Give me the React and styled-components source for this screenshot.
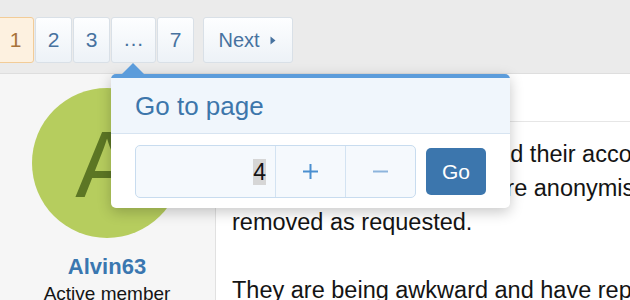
import React from 'react';
import styled, { createGlobalStyle } from 'styled-components';

const GlobalStyle = createGlobalStyle`
    html, body {
        margin: 0;
        padding: 0;
        overflow: hidden;
        background: #ffffff;
        font-family: "Liberation Sans", Arial, sans-serif;
    }
`

const pages = ['1', '2', '3', '…', '7'];

export default function App() {
    return (
        <Page>
            <GlobalStyle />
            <TopBar>
                <Pager>
                    {pages.map((p) => (
                        <PageSlot key={p}>
                            <PageButton $current={p === '1'} $wide={p === '…'}>{p}</PageButton>
                            {p === '…' && <GoToPopup />}
                        </PageSlot>
                    ))}
                    <NextButton>
                        Next
                        <svg width="6" height="9" viewBox="0 0 6 9">
                            <path d="M0.5 0.5 L5.5 4.5 L0.5 8.5 Z" fill="#47729f" />
                        </svg>
                    </NextButton>
                </Pager>
            </TopBar>

            <Post>
                <UserCell>
                    <Avatar>A</Avatar>
                    <UserName>Alvin63</UserName>
                    <UserTitle>Active member</UserTitle>
                </UserCell>
                <MessageCell>
                    <MessageHeader />
                    <MessageBody>
                        <Paragraph>
                            A person has just requested their account be closed and<br />
                            deleted, all of their posts are anonymised and their data<br />
                            removed as requested.
                        </Paragraph>
                        <Paragraph>
                            They are being awkward and have repeatedly asked again.
                        </Paragraph>
                    </MessageBody>
                </MessageCell>
            </Post>
        </Page>
    )
}

function GoToPopup() {
    return (
        <Popup>
            <PopupArrow />
            <PopupHeader>Go to page</PopupHeader>
            <PopupBody>
                <InputGroup>
                    <ValueField><Selected>4</Selected></ValueField>
                    <StepButton>
                        <svg width="17" height="17" viewBox="0 0 17 17">
                            <path d="M8.5 1 V16 M1 8.5 H16" stroke="#4a8fd0" strokeWidth="2" />
                        </svg>
                    </StepButton>
                    <StepButton>
                        <svg width="17" height="17" viewBox="0 0 17 17">
                            <path d="M1 8.5 H16" stroke="#8db4dc" strokeWidth="2" />
                        </svg>
                    </StepButton>
                </InputGroup>
                <GoButton>Go</GoButton>
            </PopupBody>
        </Popup>
    )
}

const Page = styled.div`
    width: 630px;
    height: 300px;
    overflow: hidden;
    position: relative;
`

const TopBar = styled.div`
    height: 73px;
    background: #ebebeb;
    border-bottom: 1px solid #dedede;
    box-sizing: content-box;
`

const Pager = styled.div`
    display: flex;
    align-items: flex-start;
    gap: 1px;
    padding-top: 17px;
    margin-left: -3px;
`

const PageSlot = styled.div`
    position: relative;
`

const PageButton = styled.div`
    box-sizing: border-box;
    width: ${({ $wide }) => ($wide ? '45px' : '37px')};
    height: 46px;
    display: flex;
    align-items: center;
    justify-content: center;
    font-size: 21px;
    border-radius: 3px;
    border: 1px solid ${({ $current }) => ($current ? '#f2cc98' : '#d9e0e7')};
    background: ${({ $current }) => ($current ? '#fdf1e0' : 'linear-gradient(#fdfeff, #edf2f7)')};
    color: ${({ $current }) => ($current ? '#a8733a' : '#47729f')};
    padding-bottom: ${({ $wide }) => ($wide ? '2px' : '0')};
`

const NextButton = styled.div`
    box-sizing: border-box;
    margin-left: 8px;
    width: 90px;
    height: 46px;
    display: flex;
    align-items: center;
    justify-content: center;
    gap: 10px;
    padding-right: 2px;
    font-size: 20px;
    color: #47729f;
    border-radius: 3px;
    border: 1px solid #d9e0e7;
    background: linear-gradient(#fdfeff, #edf2f7);
`

const Popup = styled.div`
    position: absolute;
    z-index: 2;
    top: 57px;
    left: 0;
    width: 399px;
    box-sizing: border-box;
    border-top: 4px solid #5b9cdb;
    border-radius: 5px;
    background: #ffffff;
    box-shadow: 0 4px 14px rgba(0, 0, 0, 0.22);
`

const PopupArrow = styled.div`
    position: absolute;
    top: -15px;
    left: 11px;
    width: 0;
    height: 0;
    border-left: 11px solid transparent;
    border-right: 11px solid transparent;
    border-bottom: 11px solid #5b9cdb;
`

const PopupHeader = styled.div`
    height: 56px;
    box-sizing: border-box;
    padding: 13px 24px 0;
    background: #f0f6fc;
    border-bottom: 1px solid #d7e4f1;
    font-size: 26px;
    color: #3d76ab;
`

const PopupBody = styled.div`
    display: flex;
    align-items: center;
    gap: 10px;
    padding: 11px 24px 10px;
`

const InputGroup = styled.div`
    display: flex;
    height: 53px;
    box-sizing: border-box;
    border: 1px solid #c8dcef;
    border-radius: 5px;
    background: #f5f9fd;
`

const ValueField = styled.div`
    width: 140px;
    display: flex;
    align-items: center;
    justify-content: flex-end;
    padding-right: 9px;
    box-sizing: border-box;
    font-size: 23px;
    color: #141414;
    border-right: 1px solid #d3e3f2;
`

const Selected = styled.span`
    background: #d6d6d6;
    line-height: 26px;
`

const StepButton = styled.div`
    width: 69px;
    display: flex;
    align-items: center;
    justify-content: center;
    & + & {
        border-left: 1px solid #d3e3f2;
    }
`

const GoButton = styled.div`
    width: 62px;
    height: 47px;
    display: flex;
    align-items: center;
    justify-content: center;
    border-radius: 5px;
    background: #3c76ad;
    color: #ffffff;
    font-size: 21px;
`

const Post = styled.div`
    display: grid;
    grid-template-columns: 216px 1fr;
    height: 226px;
`

const UserCell = styled.div`
    background: #f6f6f6;
    border-right: 1px solid #e1e1e1;
    display: flex;
    flex-direction: column;
    align-items: center;
    padding-top: 14px;
    padding-right: 1px;
`

const Avatar = styled.div`
    width: 150px;
    height: 150px;
    border-radius: 50%;
    background: #b6cd5e;
    color: #5c7624;
    display: flex;
    align-items: center;
    justify-content: center;
    font-size: 95px;
    line-height: 1;
    padding-top: 2px;
    box-sizing: border-box;
`

const UserName = styled.div`
    margin-top: 16px;
    font-size: 22px;
    font-weight: bold;
    color: #3a77b0;
`

const UserTitle = styled.div`
    margin-top: 3px;
    font-size: 19px;
    color: #141414;
`

const MessageCell = styled.div`
    display: flex;
    flex-direction: column;
`

const MessageHeader = styled.div`
    height: 47px;
    border-bottom: 1px solid #e6e6e6;
`

const MessageBody = styled.div`
    padding: 15px 16px;
    font-size: 23.5px;
    line-height: 34px;
    color: #141414;
`

const Paragraph = styled.p`
    margin: 0 0 34px;
    white-space: nowrap;
`
